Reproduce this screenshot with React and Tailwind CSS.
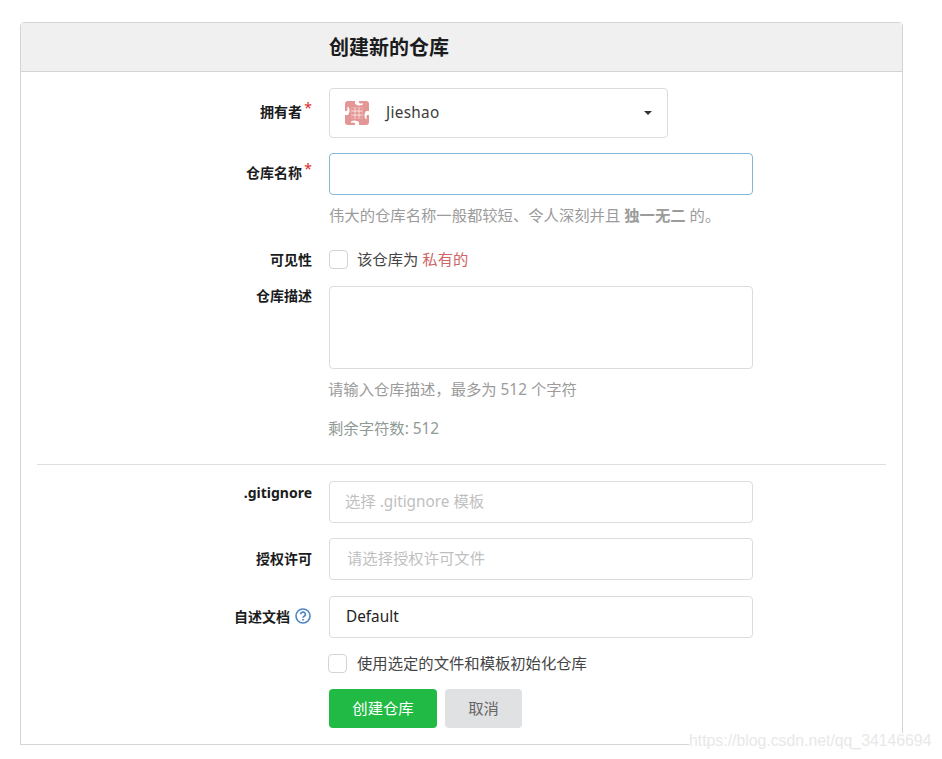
const font = "font-['Noto_Sans','Noto_Sans_CJK_SC',sans-serif]";

const Label = ({ children, className = "" }) => (
  <label className={`w-[291px] shrink-0 text-right text-[14px] leading-[20px] font-bold text-[#1b1c1d] ${className}`}>
    {children}
  </label>
);

const Star = () => (
  <span className="absolute -top-[4px] -right-[10px] text-[14px] font-normal text-[#db2828]">*</span>
);

const Checkbox = () => (
  <span className="h-[19px] w-[19px] shrink-0 rounded-[4px] border border-[#d4d4d5] bg-white"></span>
);

const notch = "M10 0h4v2c2 .8 3 .8 4 0v1.5c-2 1-4 1.5-6 .5L10 3z";

const Avatar = () => (
  <svg width="24" height="24" viewBox="0 0 24 24" className="shrink-0">
    <rect width="24" height="24" rx="3" fill="#e39693" />
    <g fill="#fff">
      <path d={notch} />
      <path d={notch} transform="rotate(90 12 12)" />
      <path d={notch} transform="rotate(180 12 12)" />
      <path d={notch} transform="rotate(270 12 12)" />
    </g>
    <rect x="6.5" y="6.5" width="11" height="11" fill="#f4cfcd" />
    <g fill="#e39693">
      <circle cx="8" cy="8" r="1.6" />
      <circle cx="12" cy="8" r="1.6" />
      <circle cx="16" cy="8" r="1.6" />
      <circle cx="8" cy="12" r="1.6" />
      <circle cx="12" cy="12" r="1.6" />
      <circle cx="16" cy="12" r="1.6" />
      <circle cx="8" cy="16" r="1.6" />
      <circle cx="12" cy="16" r="1.6" />
      <circle cx="16" cy="16" r="1.6" />
    </g>
  </svg>
);

const App = () => {
  return (
    <div className={`relative h-[759px] w-[942px] overflow-hidden bg-white pl-[20px] pt-[22px] text-[15.33px] leading-[20px] ${font}`}>
      <div className="h-[723px] w-[883px] rounded-t-[4px] border border-[#d4d4d5]">
        <h3 className="flex h-[49px] items-center border-b border-[#d4d4d5] bg-[#f0f0f0] pl-[308px] pt-[1px] text-[20px] font-bold text-[#1b1c1d]">
          创建新的仓库
        </h3>

        <div className="pt-[16px]">
          <div className="flex items-center gap-[17px]">
            <Label className="relative -top-[1px]">
              <span className="relative mr-[10px]">
                拥有者
                <Star />
              </span>
            </Label>
            <div className="flex h-[50px] w-[339px] items-center rounded-[4px] border border-[#dcdcdc] px-[15px] text-[#3b3b3b]">
              <Avatar />
              <span className="ml-[17px] pb-[2px] text-[15.33px] tracking-[0.3px]">Jieshao</span>
              <span className="ml-auto h-0 w-0 border-x-[4px] border-t-[4px] border-x-transparent border-t-[#333]"></span>
            </div>
          </div>

          <div className="mt-[15px] flex items-center gap-[17px]">
            <Label className="relative -top-[1px]">
              <span className="relative mr-[10px]">
                仓库名称
                <Star />
              </span>
            </Label>
            <input className="h-[42px] w-[424px] rounded-[4px] border border-[#85b7d9] outline-none" />
          </div>
          <p className="ml-[308px] mt-[10px] text-[#9b9b9b]">
            伟大的仓库名称一般都较短、令人深刻并且 <b>独一无二</b> 的。
          </p>

          <div className="mt-[25px] flex h-[19px] items-center gap-[17px]">
            <Label>可见性</Label>
            <Checkbox />
            <span className="-ml-[8px] pb-[2px] text-[#444]">
              该仓库为 <span className="text-[#cf6565]">私有的</span>
            </span>
          </div>

          <div className="mt-[17px] flex items-start gap-[17px]">
            <Label>仓库描述</Label>
            <textarea className="h-[83px] w-[424px] resize-none rounded-[4px] border border-[#dcdcdc] outline-none" />
          </div>
          <p className="ml-[307px] mt-[10px] text-[#9b9b9b]">请输入仓库描述，最多为 512 个字符</p>
          <p className="ml-[307px] mt-[19px] text-[#8f9a93]">剩余字符数: 512</p>

          <div className="mx-[16px] mt-[26px] border-t border-[#dedede]"></div>

          <div className="mt-[16px] flex items-start gap-[17px]">
            <Label className="pt-[2px] text-[14.6px]">.gitignore</Label>
            <div className="flex h-[42px] w-[424px] items-center rounded-[4px] border border-[#dcdcdc] pb-[2px] pl-[15px] text-[#bfbfbf]">
              选择 .gitignore 模板
            </div>
          </div>
          <div className="mt-[15px] flex items-center gap-[17px]">
            <Label>授权许可</Label>
            <div className="flex h-[42px] w-[424px] items-center rounded-[4px] border border-[#dcdcdc] pb-[2px] pl-[17px] text-[#bfbfbf]">
              请选择授权许可文件
            </div>
          </div>
          <div className="mt-[16px] flex items-center gap-[17px]">
            <Label className="flex items-center justify-end gap-[5px] pr-[1px]">
              自述文档
              <svg width="16" height="16" viewBox="0 0 16 16" fill="none" stroke="#4b84c4" className="mb-[2px]">
                <circle cx="8" cy="8" r="7" strokeWidth="1.6" />
                <path d="M5.6 6.3a2.4 2.2 0 1 1 3.6 1.9c-.8.5-1.2.8-1.2 1.6" strokeWidth="1.6" />
                <path d="M8 11v1.5" strokeWidth="1.7" />
              </svg>
            </Label>
            <div className="flex h-[42px] w-[424px] items-center rounded-[4px] border border-[#dcdcdc] pb-[2px] pl-[16px] text-[#222]">
              Default
            </div>
          </div>

          <div className="ml-[307px] mt-[16px] flex h-[19px] items-center gap-[10px] text-[#444]">
            <Checkbox />
            <span className="pb-[2px]">使用选定的文件和模板初始化仓库</span>
          </div>

          <div className="ml-[308px] mt-[16px] flex gap-[8px]">
            <button className="h-[39px] w-[108px] rounded-[4px] bg-[#21ba45] pb-[2px] text-white">创建仓库</button>
            <button className="h-[39px] w-[77px] rounded-[4px] bg-[#e0e1e2] pb-[2px] text-[#666]">取消</button>
          </div>
        </div>
      </div>

      <span className="absolute left-[689px] top-[733px] bg-white font-['Liberation_Sans',sans-serif] text-[15.8px] leading-[16px] text-[#e8e8e8]">
        https://blog.csdn.net/qq_34146694
      </span>
    </div>
  );
};

export default App;
